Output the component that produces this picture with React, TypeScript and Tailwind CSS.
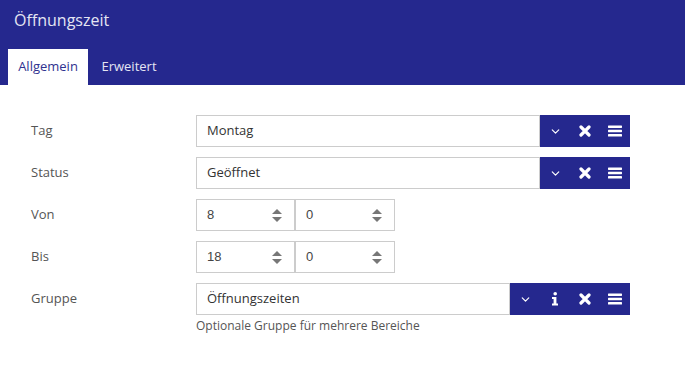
import { ChevronDown } from "lucide-react"

const font = { fontFamily: '"Open Sans", sans-serif' }

function XIcon() {
  return (
    <svg width="12" height="12" viewBox="0 0 12 12">
      <path d="M2 2 L10 10 M10 2 L2 10" stroke="white" strokeWidth="3.2" strokeLinecap="round" />
    </svg>
  )
}

function BarsIcon() {
  return (
    <svg width="14" height="12" viewBox="0 0 14 12">
      <rect x="0" y="0.5" width="14" height="2.4" rx="0.6" fill="white" />
      <rect x="0" y="4.8" width="14" height="2.4" rx="0.6" fill="white" />
      <rect x="0" y="9.1" width="14" height="2.4" rx="0.6" fill="white" />
    </svg>
  )
}

function InfoIcon() {
  return (
    <svg width="8" height="14" viewBox="0 0 8 14">
      <circle cx="4.2" cy="1.8" r="1.8" fill="white" />
      <path d="M1 5 H5.4 V11.6 H7 V13.6 H1 V11.6 H2.6 V7 H1 Z" fill="white" />
    </svg>
  )
}

function Btn({ children }: { children: React.ReactNode }) {
  return <div className="w-[30px] h-full flex items-center justify-center">{children}</div>
}

function SelectField({ value, info }: { value: string; info?: boolean }) {
  return (
    <div className="flex h-[32px] w-[434px]">
      <div className="flex-1 border border-[#cccccc] flex items-center px-[10px] text-[13px] text-[#333]">{value}</div>
      <div className="flex h-full bg-[#25288e]">
        <Btn><ChevronDown size={13} color="white" strokeWidth={2.2} /></Btn>
        {info && <Btn><InfoIcon /></Btn>}
        <Btn><XIcon /></Btn>
        <Btn><BarsIcon /></Btn>
      </div>
    </div>
  )
}

function NumField({ value, w }: { value: string; w: string }) {
  return (
    <div className={`${w} h-[32px] border border-[#cccccc] flex items-center justify-between pl-[10px] pr-[12px]`}>
      <span className="text-[13px] text-[#444]" style={{ fontFamily: '"Liberation Sans", Arial, sans-serif' }}>{value}</span>
      <div className="flex flex-col items-center gap-[3px]">
        <div className="w-0 h-0 border-l-[5px] border-r-[5px] border-b-[5px] border-l-transparent border-r-transparent border-b-[#777]" />
        <div className="w-0 h-0 border-l-[5px] border-r-[5px] border-t-[5px] border-l-transparent border-r-transparent border-t-[#777]" />
      </div>
    </div>
  )
}

function Row({ label, children }: { label: string; children: React.ReactNode }) {
  return (
    <div className="flex items-start">
      <div className="w-[196px] pl-[31px] h-[32px] flex items-center text-[13px] text-[#555]">{label}</div>
      <div>{children}</div>
    </div>
  )
}

export default function App() {
  return (
    <div className="w-[685px] h-[372px] bg-white" style={font}>
      <div className="bg-[#25288e] h-[85px] flex flex-col justify-between">
        <div className="pl-[14px] pt-[8px] text-[16px] text-[#e4e5f3]">Öffnungszeit</div>
        <div className="flex pl-[8px] h-[36px]">
          <div className="bg-white w-[80px] flex items-center justify-center text-[13px] text-[#2f3290]">Allgemein</div>
          <div className="w-[82px] flex items-center justify-center text-[13px] text-[#e4e5f3]">Erweitert</div>
        </div>
      </div>
      <div className="pt-[30px] flex flex-col gap-[10px]">
        <Row label="Tag"><SelectField value="Montag" /></Row>
        <Row label="Status"><SelectField value="Geöffnet" /></Row>
        <Row label="Von">
          <div className="flex"><NumField value="8" w="w-[99px]" /><NumField value="0" w="w-[100px]" /></div>
        </Row>
        <Row label="Bis">
          <div className="flex"><NumField value="18" w="w-[99px]" /><NumField value="0" w="w-[100px]" /></div>
        </Row>
        <Row label="Gruppe">
          <SelectField value="Öffnungszeiten" info />
          <div className="pt-[2px] text-[12px] text-[#555]">Optionale Gruppe für mehrere Bereiche</div>
        </Row>
      </div>
    </div>
  )
}
